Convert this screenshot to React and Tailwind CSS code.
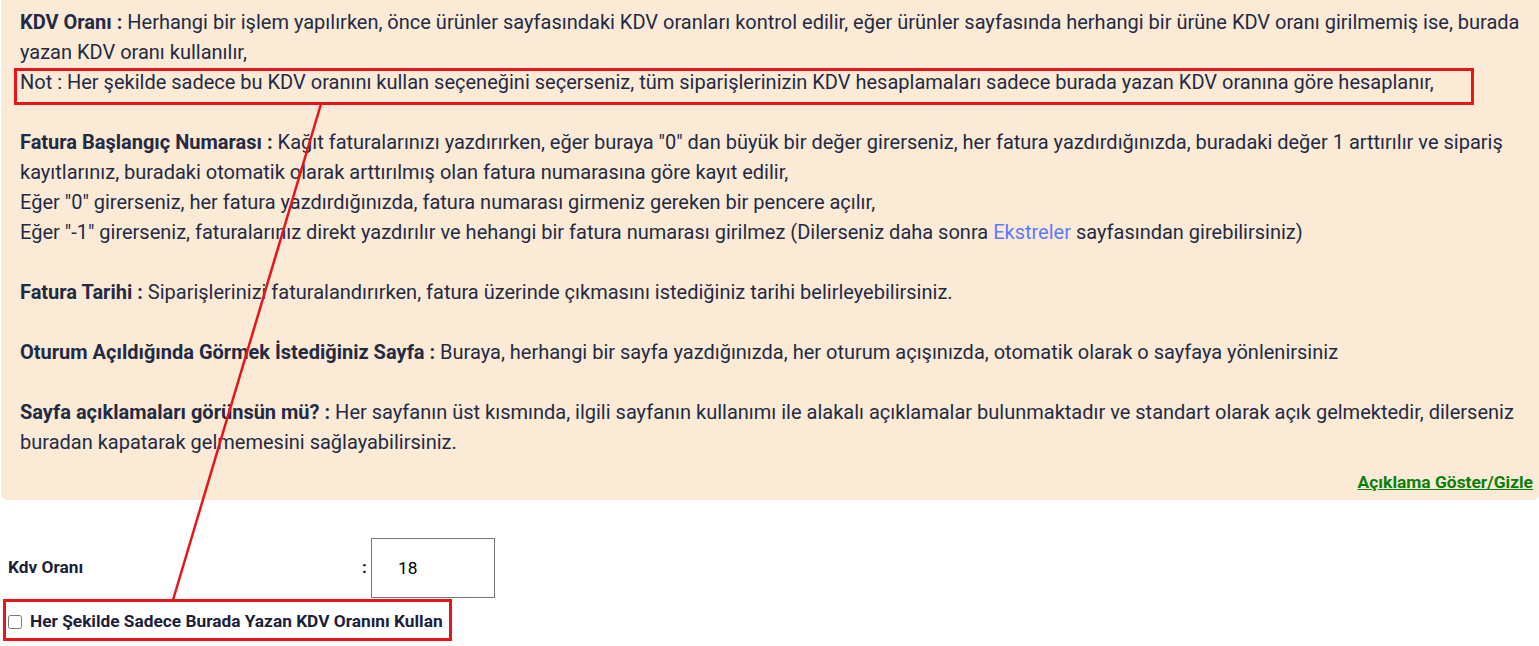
import { useState } from "react";

const Help = ({ title, children }) => (
  <>
    <b>{title} :</b> {children}
  </>
);

export default function App() {
  const [kdv, setKdv] = useState("18");
  const [onlyThis, setOnlyThis] = useState(false);
  const [showHelp] = useState(true);

  return (
    <div className="relative h-[646px] overflow-hidden bg-white font-['Roboto',sans-serif]">
      {/* Description panel */}
      {showHelp && (
        <div className="ml-px rounded-b-md bg-[#faead6] pt-[7px] pb-[3px] pl-[19px] pr-[6px] text-[20px] leading-[30px] text-[#242a44]">
          <div>
            <Help title="KDV Oranı">
              Herhangi bir işlem yapılırken, önce ürünler sayfasındaki KDV oranları kontrol edilir, eğer ürünler sayfasında herhangi bir ürüne KDV oranı girilmemiş ise, burada yazan KDV oranı kullanılır,
            </Help>
            <br />
            Not : Her şekilde sadece bu KDV oranını kullan seçeneğini seçerseniz, tüm siparişlerinizin KDV hesaplamaları sadece burada yazan KDV oranına göre hesaplanır,
            <br />
            <br />
            <Help title="Fatura Başlangıç Numarası">
              Kağıt faturalarınızı yazdırırken, eğer buraya "0" dan büyük bir değer girerseniz, her fatura yazdırdığınızda, buradaki değer 1 arttırılır ve sipariş kayıtlarınız, buradaki otomatik olarak arttırılmış olan fatura numarasına göre kayıt edilir,
            </Help>
            <br />
            Eğer "0" girerseniz, her fatura yazdırdığınızda, fatura numarası girmeniz gereken bir pencere açılır,
            <br />
            Eğer "-1" girerseniz, faturalarınız direkt yazdırılır ve hehangi bir fatura numarası girilmez (Dilerseniz daha sonra{" "}
            <a href="#" className="text-[#5b7cfb]">Ekstreler</a> sayfasından girebilirsiniz)
            <br />
            <br />
            <Help title="Fatura Tarihi">
              Siparişlerinizi faturalandırırken, fatura üzerinde çıkmasını istediğiniz tarihi belirleyebilirsiniz.
            </Help>
            <br />
            <br />
            <Help title="Oturum Açıldığında Görmek İstediğiniz Sayfa">
              Buraya, herhangi bir sayfa yazdığınızda, her oturum açışınızda, otomatik olarak o sayfaya yönlenirsiniz
            </Help>
            <br />
            <br />
            <Help title="Sayfa açıklamaları görünsün mü?">
              Her sayfanın üst kısmında, ilgili sayfanın kullanımı ile alakalı açıklamalar bulunmaktadır ve standart olarak açık gelmektedir, dilerseniz buradan kapatarak gelmemesini sağlayabilirsiniz.
            </Help>
          </div>
          <div className="mt-[10px] text-right text-[17.4px] leading-[30px]">
            <a href="#" className="font-bold text-[#0a7f0a] underline">Açıklama Göster/Gizle</a>
          </div>
        </div>
      )}

      {/* Form */}
      <div className="mt-[38px] text-[#1c1f3a]">
        <div className="flex items-center">
          <label className="w-[362px] pl-2 text-[17.3px] font-bold">Kdv Oranı</label>
          <span className="w-[9px] text-[17.3px] font-bold">:</span>
          <input
            value={kdv}
            onChange={(e) => setKdv(e.target.value)}
            className="h-[60px] w-[124px] border border-[#767676] bg-white pl-[26px] text-[17.3px] text-black outline-none"
          />
        </div>
        <label className="mt-[11px] flex items-center pl-2 text-[17.3px] font-bold">
          <input
            type="checkbox"
            checked={onlyThis}
            onChange={(e) => setOnlyThis(e.target.checked)}
            className="mr-[8px] h-[14px] w-[14px]"
          />
          Her Şekilde Sadece Burada Yazan KDV Oranını Kullan
        </label>
      </div>

      {/* Red annotation overlay */}
      <div className="pointer-events-none absolute left-[14px] top-[68px] h-[37px] w-[1460px] border-[3px] border-[#e8141c]" />
      <div className="pointer-events-none absolute left-[3px] top-[599px] h-[42px] w-[449px] border-[3px] border-[#e8141c]" />
      <svg className="pointer-events-none absolute left-0 top-0" width="1539" height="646">
        <line x1="321" y1="104" x2="173" y2="600" stroke="#e8141c" strokeWidth="2.5" />
      </svg>
    </div>
  );
}
